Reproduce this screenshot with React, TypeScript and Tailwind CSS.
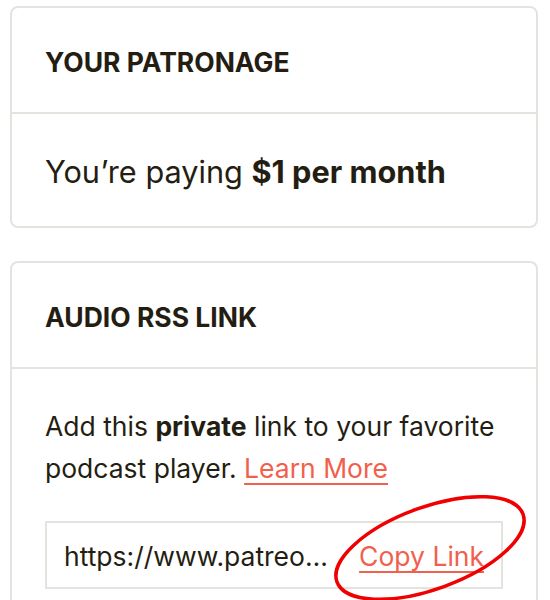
export default function App() {
  return (
    <div
      className="relative min-h-[600px] bg-white pt-[6px] pl-[10px] pr-[12px] text-[#241e12]"
      style={{ fontFamily: "Inter, 'Liberation Sans', sans-serif" }}
    >
      <div className="rounded-lg border-2 border-[#e5e3dd]">
        <div className="flex h-[106px] items-center border-b-2 border-[#e5e3dd] px-[33px] pt-[4px]">
          <h2 className="text-[26.5px] font-bold uppercase leading-none">
            Your Patronage
          </h2>
        </div>
        <div className="flex h-[112px] items-center px-[33px] pt-[4px]">
          <p className="text-[30.7px] leading-none">
            You’re paying <span className="font-bold">$1 per month</span>
          </p>
        </div>
      </div>

      <div className="mt-[33px] rounded-t-lg border-2 border-b-0 border-[#e5e3dd]">
        <div className="flex h-[106px] items-center border-b-2 border-[#e5e3dd] px-[33px] pt-[4px]">
          <h2 className="text-[26.5px] font-bold uppercase leading-none">
            Audio RSS Link
          </h2>
        </div>
        <div className="px-[33px] pt-[36px] pb-8">
          <p className="text-[26.5px] leading-[42px]">
            Add this <span className="font-bold">private</span> link to your favorite podcast player.{" "}
            <a href="#" className="text-[#f1604c] underline decoration-2 underline-offset-[5px]">
              Learn More
            </a>
          </p>
          <div className="mt-[32px] flex h-[68px] items-center gap-[30px] border-2 border-[#e5e3dd] px-[17px] pt-[4px] text-[26.5px]">
            <span className="min-w-0 flex-1 truncate">
              https://www.patreon.com/rss/audio?auth=private
            </span>
            <a href="#" className="shrink-0 text-[#f1604c] underline decoration-2 underline-offset-[5px]">
              Copy Link
            </a>
          </div>
        </div>
      </div>

      <svg
        className="pointer-events-none absolute left-0 top-0"
        width="550"
        height="600"
        viewBox="0 0 550 600"
      >
        <ellipse
          cx="430"
          cy="548"
          rx="99"
          ry="41"
          transform="rotate(-20 430 548)"
          fill="none"
          stroke="#f00000"
          strokeWidth="3.5"
        />
      </svg>
    </div>
  );
}
